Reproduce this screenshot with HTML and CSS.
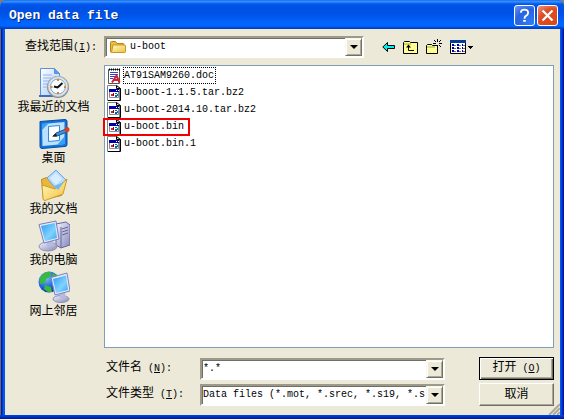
FILE: index.html
```html
<!DOCTYPE html>
<html lang="zh-CN">
<head>
<meta charset="utf-8">
<title>Open data file</title>
<link rel="stylesheet" href="styles.css">
</head>
<body>
<svg class="defs" aria-hidden="true">
  <defs>
    <linearGradient id="screen" x1="0" y1="0" x2="1" y2="1"><stop offset="0" stop-color="#2d9cf5"/><stop offset=".6" stop-color="#7fd3fd"/><stop offset="1" stop-color="#3aa5f2"/></linearGradient>
    <linearGradient id="paper" x1="0" y1="0" x2="1" y2="1"><stop offset="0" stop-color="#fff"/><stop offset="1" stop-color="#a9c8f8"/></linearGradient>
    <linearGradient id="gold" x1="0" y1="0" x2="1" y2="1"><stop offset="0" stop-color="#fffbc0"/><stop offset="1" stop-color="#f0c040"/></linearGradient>
    <linearGradient id="metal" x1="0" y1="0" x2="1" y2="1"><stop offset="0" stop-color="#f4f4ff"/><stop offset="1" stop-color="#8486b8"/></linearGradient>
    <radialGradient id="globe" cx=".35" cy=".3" r=".8"><stop offset="0" stop-color="#7fc4ff"/><stop offset=".6" stop-color="#1a62d8"/><stop offset="1" stop-color="#0b2f8c"/></radialGradient>
    <symbol id="binfile" viewBox="0 0 16 16">
      <path d="M.5 .5h9l3 3v12h-12z" fill="#fff" stroke="#808080"/>
      <path d="M13.500 3.500v12H1" fill="none" stroke="#000"/>
      <path d="M9.500 .5v3h4z" fill="#ddd" stroke="#000"/>
      <path d="M2.500 4.500h9v8h-9z" fill="#fff" stroke="#8a8a9a"/>
      <path d="M2 4h10v3H2z" fill="#0000a8"/>
      <path d="M9 5h1v1H9zM11 5h1v1h-1z" fill="#fff"/>
      <path d="M4 9h2v2H4z" fill="#e02020"/><path d="M6 8h1v3H6z" fill="#800000"/>
      <path d="M8 8h2v1H8zM8 10h2v2H8z" fill="#0060c0"/><path d="M10 9h1v2h-1z" fill="#008080"/>
    </symbol>
  </defs>
</svg>
<main class="window">
  <header class="titlebar">
    <h1>Open data file</h1>
    <button class="cap help" type="button" aria-label="Help"><svg viewBox="0 0 21 21"><path d="M6.500 7.500Q6.500 4 10.500 4t4 3.500q0 2-2 3.200-2 1-2 3.300" fill="none" stroke="#fff" stroke-width="2"/><path d="M9 15.500h3v2H9z" fill="#fff"/></svg></button>
    <button class="cap close" type="button" aria-label="Close"><svg viewBox="0 0 21 21"><path d="M5 5l11 11M16 5l-11 11" stroke="#fff" stroke-width="2.500"/></svg></button>
  </header>
  <form class="body">
    <label class="lookin-label" for="lookin">查找范围<span class="lat">(<u>I</u>):</span></label>
    <div class="lookin-row">
      <div class="combo">
        <svg class="folder" viewBox="0 0 16 16"><path d="M.5 3.500q0-1 1-1h4l1.500 2h6q1 0 1 1v8h-12.500q-1 0-1-1z" fill="#e9bd45" stroke="#b88416"/><path d="M3 6h11.500q1 0 1 1v5.500q0 1-1 1H2.500q-1 0-.8-1z" fill="url(#gold)" stroke="#c9971f"/></svg>
        <select id="lookin"><option>u-boot</option></select>
        <span class="arrow"></span>
      </div>
      <div class="tools">
        <button type="button" aria-label="Back"><svg width="13" height="12" viewBox="0 0 13 12"><path d="M.8 6l4.700-4.500v3h7v3h-7v3z" fill="#00f0f0" stroke="#000"/></svg></button>
        <button type="button" aria-label="Up one level"><svg width="15" height="14" viewBox="0 0 15 14"><path d="M.5 13.500v-11l1-1h5l1 1h7v11z" fill="#ffff90" stroke="#000"/><path d="M1 4h7" stroke="#a0a050"/><path d="M5.500 6v4.500H11" fill="none" stroke="#000"/><path d="M3 7.500h5L5.500 4.500z"/></svg></button>
        <button type="button" aria-label="New folder"><svg width="16" height="16" viewBox="0 0 16 16"><path d="M.5 14.500v-8l1-1h4l1 1h5v8z" fill="#ffff90" stroke="#000"/><path d="M1 8h8" stroke="#a0a050"/><path d="M11 0h1v3h-1zM8 1h1v1H8zM9 2h1v1H9zM14 1h1v1h-1zM13 2h1v1h-1zM7 4h3v1H7zM13 4h3v1h-3zM11 6h1v3h-1zM9 6h1v1H9zM13 6h1v1h-1zM14 7h1v1h-1z"/></svg></button>
        <button type="button" aria-label="View menu"><svg width="24" height="14" viewBox="0 0 24 14"><path d="M.5.5h15v13H.5z" fill="#fff" stroke="#000"/><path d="M0 0h16v3H0z" fill="#003c98"/><path d="M2 4h2v2H2zM7 4h2v2H7zM12 4h1v2h-1zM2 7h2v2H2zM7 7h2v2H7zM12 7h1v2h-1zM2 10h2v2H2zM7 10h2v2H7zM12 10h1v2h-1z" fill="#0000a8"/><path d="M4 5.500h2M9 5.500h2M13 5.500h2M4 8.500h2M9 8.500h2M13 8.500h2M4 11.500h2M9 11.500h2M13 11.500h2" stroke="#777"/><path d="M18 6h5v1h-1v1h-1v1h-1V8h-1V7h-1z"/></svg></button>
      </div>
    </div>
    <nav class="places">
      <button type="button"><svg viewBox="0 0 32 32"><path d="M2.500 1.500h14l5 5v22h-19z" fill="url(#paper)" stroke="#5b8fe0"/><path d="M16.500 1.500v5h5" fill="#5c9af0" stroke="#5b8fe0"/><path d="M5 8h9M5 11h8M5 14h6M5 17h5M5 20h5" stroke="#8fb4ee"/><path d="M1 29h19" stroke="#3c6fc4" stroke-width="2"/><circle cx="20" cy="20" r="11" fill="#85898f"/><circle cx="20" cy="19.500" r="10" fill="#d8e8f4" stroke="#b8bec8"/><circle cx="20" cy="19.500" r="7.500" fill="#f8fdff" stroke="#8da4b8"/><path d="M16 19.500l3.500 1 5-4.500M19.500 20.500l2.500-2" fill="none" stroke="#111" stroke-width="2"/><path d="M19 12h2v2h-2zM19 25h2v2h-2zM12.500 19h2v2h-2zM26 19h2v2h-2z" fill="#f08020"/></svg>我最近的文档</button>
      <button type="button"><svg viewBox="0 0 32 32"><path d="M2 3.500L27 1.500q2 0 2 2v23q0 2-2 2L4 30.500q-2 0-2-2z" fill="#1473d8" stroke="#084bab"/><path d="M4 6l22.500-2v22L4.500 28z" fill="#b8e2ff"/><path d="M4 6l7-1-7 7zM27 18v8l-8 1z" fill="#38a0f4"/><path d="M10.500 8.500l11-1v15l-11 1z" fill="#fff" stroke="#3288dc"/><path d="M15 18l3-3 10-4 1 3-10 4z" fill="#3f91d8" stroke="#17548c"/><path d="M14 18.500l4-3 1 3z" fill="#222"/><circle cx="29" cy="11.500" r="2.500" fill="#d84020"/></svg>桌面</button>
      <button type="button"><svg viewBox="0 0 32 32"><path d="M3.500 10.500l5-2 4 2 9-4 2 20-18 4z" fill="#e8b83c" stroke="#c08a18"/><path d="M9 9l9-8 10 10-9 10z" fill="#b8ddff" stroke="#65a5e8"/><path d="M12 9l6-5 6 6-6 6z" fill="#d8eeff"/><path d="M4 16l13 4 12-10-4 15-18 6.500q-2 0-2-2z" fill="url(#gold)" stroke="#cf9a24"/><path d="M16 17l10-4-6 8z" fill="#70b8f0"/></svg>我的文档</button>
      <button type="button"><svg viewBox="0 0 32 32"><path d="M18 4l10-2 4 3v20l-9 3-5-3z" fill="url(#metal)" stroke="#6668a0"/><path d="M23 7v21M24 9l6-2M24 12l6-2M24 15l6-2" stroke="#6265a0"/><ellipse cx="10" cy="26.500" rx="9" ry="4.500" fill="url(#metal)" stroke="#8c90b8"/><path d="M9 20l6-1 1 7H9z" fill="#b7bbdc"/><path d="M1 4.500L18 1l3 18-15 4z" fill="#e4e8ff" stroke="#7c80bc"/><path d="M3 6l14-3 2 15-12 3z" fill="url(#screen)"/></svg>我的电脑</button>
      <button type="button"><svg viewBox="0 0 32 32"><circle cx="11" cy="11" r="10.500" fill="url(#globe)"/><path d="M3 5q5-5 10-4l-1 5-4 2-1 4-5 1q-1-4 1-8zM7 14l6 2 1 5-4 0-4-3zM15 2l5 3-2 3-4-2z" fill="#3cb83c"/><ellipse cx="23" cy="28" rx="8" ry="3.500" fill="url(#metal)" stroke="#8c90b8"/><path d="M21 22l6-1 1 6h-6z" fill="#b7bbdc"/><path d="M13 6.500L29 2l3 18-15 4z" fill="#e4e8ff" stroke="#7c80bc"/><path d="M15 8l13-3.500L30 19l-12 3z" fill="url(#screen)"/></svg>网上邻居</button>
    </nav>
    <ul class="files">
      <li><svg viewBox="0 0 16 16"><path d="M1.500 1.500h11v14h-11z" fill="#fff" stroke="#555"/><path d="M2 1.500h11" stroke="#000" stroke-dasharray="1 1" stroke-width="2"/><path d="M3 4.500h8M3 6.500h8M3 8.500h5M3 10.500h3" stroke="#3048d0"/><path d="M5 14.500L9.500 7.500l3 7M7 12h5" fill="none" stroke="#d02030" stroke-width="2"/></svg><span class="name focused">AT91SAM9260.doc</span></li>
      <li><svg viewBox="0 0 16 16"><use href="#binfile" width="16" height="16"/></svg><span class="name">u-boot-1.1.5.tar.bz2</span></li>
      <li><svg viewBox="0 0 16 16"><use href="#binfile" width="16" height="16"/></svg><span class="name">u-boot-2014.10.tar.bz2</span></li>
      <li class="marked"><svg viewBox="0 0 16 16"><use href="#binfile" width="16" height="16"/></svg><span class="name">u-boot.bin</span></li>
      <li><svg viewBox="0 0 16 16"><use href="#binfile" width="16" height="16"/></svg><span class="name">u-boot.bin.1</span></li>
    </ul>
    <div class="fields">
      <label for="fname">文件名<span class="lat"> (<u>N</u>):</span></label>
      <div class="combo"><input id="fname" type="text" value="*.*"><span class="arrow"></span></div>
      <button class="btn default" type="submit">打开<span class="lat"> (<u>O</u>)</span></button>
      <label for="ftype">文件类型<span class="lat"> (<u>T</u>):</span></label>
      <div class="combo"><select id="ftype"><option>Data files (*.mot, *.srec, *.s19, *.s</option></select><span class="arrow"></span></div>
      <button class="btn" type="button">取消</button>
    </div>
  </form>
  <svg class="grip" viewBox="0 0 12 12"><path d="M0 12L12 0M4 12l8-8M8 12l4-4" stroke="#fff" stroke-width="1"/><path d="M1 12L12 1M5 12l7-7M9 12l3-3" stroke="#aca899" stroke-width="2"/></svg>
</main>
</body>
</html>
```
FILE: styles.css
```css
*, *::before, *::after { box-sizing: border-box; }
body {
  margin: 0;
  background: #75808f;
  color: #000;
  font: 12px/16px "Liberation Mono", "Noto Sans CJK SC", monospace;
}
button, input, select { font: inherit; color: inherit; margin: 0; padding: 0; border: 0; border-radius: 0; background: none; }
button { white-space: nowrap; }
svg { display: block; flex: none; }
.defs { position: absolute; width: 0; height: 0; }
.lat { font-size: 10px; white-space: pre; }

.window {
  position: relative;
  display: flex;
  flex-direction: column;
  min-height: 100vh;
  padding: 0 4px 4px 5px;
  background: linear-gradient(90deg, #6a6a78 0 1px, #001ea0 1px 2px, #0038d8 2px 3px, #0855ee 3px 5px, #0855ee 5px calc(100% - 3px), #0030d0 calc(100% - 2px), #001590 100%);
  border-radius: 7px 7px 0 0;
  overflow: hidden;
}
.window::after {
  content: "";
  position: absolute;
  inset: auto 0 0 0;
  height: 4px;
  background: linear-gradient(#0046e0, #0030c8 50%, #001590);
}
.titlebar {
  display: flex;
  align-items: center;
  gap: 2px;
  height: 29px;
  margin: 0 -4px 0 -5px;
  padding: 2px 6px 0 9px;
  background: linear-gradient(#0a58d8 0, #3d95ff 1px, #2b86ff 2px, #0058ee 4px, #0050e2 8px, #0052e8 14px, #0064fc 22px, #0066ff 26px, #0044cc 28px, #0038b8 29px);
}
h1 { flex: 1; margin: 0; font-size: 13px; line-height: 16px; color: #fff; text-shadow: 1px 1px #0a2a80; }
.cap { width: 21px; height: 21px; border: 1px solid #fff; border-radius: 3px; }
.cap svg { width: 19px; height: 19px; }
.help { background: radial-gradient(circle at 80% 90%, #2f7cf8, #2a62e0 60%, #6f98ee); }
.close { background: radial-gradient(circle at 80% 90%, #d84a18, #dd4c24 60%, #ee9a80); }

.body {
  flex: 1;
  display: grid;
  grid-template-columns: 99px minmax(0, 1fr);
  grid-template-rows: 36px minmax(282px, 1fr) auto;
  padding: 0 6px 9px 0;
  background: #ece9d8;
}
.lookin-label { align-self: center; padding-right: 7px; text-align: right; }
.lookin-row { display: grid; grid-template-columns: minmax(0, 1fr) 190px; align-items: center; }
.combo {
  display: flex;
  align-items: center;
  height: 22px;
  border: 2px solid;
  border-color: #9d9a8b #fff #fff #9d9a8b;
  box-shadow: inset 1px 1px #716f64;
  background: #fff;
  min-width: 0;
}
.combo select, .combo input { flex: 1; min-width: 0; height: 16px; padding-left: 1px; appearance: none; outline: 0; font-size: 10px; }
.folder { width: 16px; height: 16px; margin: 0 3px 0 4px; }
.arrow {
  display: grid;
  place-items: center;
  flex: none;
  width: 17px;
  height: 18px;
  background: #ece9d8;
  border: 1px solid;
  border-color: #f8f7ee #716f64 #716f64 #f8f7ee;
  box-shadow: inset 1px 1px #fff, inset -1px -1px #aca899;
  pointer-events: none;
}
.arrow::before { content: ""; border: 4px solid transparent; border-top-color: #000; border-bottom: 0; }
.tools { display: flex; align-items: center; gap: 8px; padding-left: 18px; }

.places { display: flex; flex-direction: column; gap: 2px; padding: 2px 2px 0 0; }
.places button { display: flex; flex-direction: column; align-items: center; gap: 1px; height: 49px; }
.places svg { width: 32px; height: 32px; }

.files { margin: 0; padding: 1px 2px; list-style: none; background: #fff; border: 1px solid #7f9db9; }
.files li { position: relative; display: flex; align-items: center; height: 17px; font-size: 10px; }
.files svg { width: 16px; height: 16px; }
.name { line-height: 15px; border: 1px dotted transparent; }
.focused { padding-right: 1px; border-color: #000; }
.marked::after { content: ""; position: absolute; left: -4px; top: 0; width: 87px; height: 18px; border: 2px solid #f00000; }

.fields {
  grid-column: 2;
  display: grid;
  grid-template-columns: 96px minmax(0, 1fr) 75px;
  align-items: center;
  row-gap: 3px;
  padding-top: 9px;
}
.fields label { padding-left: 2px; }
.fields .combo { margin-right: 34px; }
.btn { height: 23px; background: #ece9d8; border: 1px solid; border-color: #fff #716f64 #716f64 #fff; box-shadow: inset -1px -1px #aca899; }
.default { border-color: #000; box-shadow: inset 1px 1px #fff, inset -1px -1px #716f64, inset -2px -2px #aca899; }
.grip { position: absolute; right: 4px; bottom: 4px; width: 12px; height: 12px; }
```
